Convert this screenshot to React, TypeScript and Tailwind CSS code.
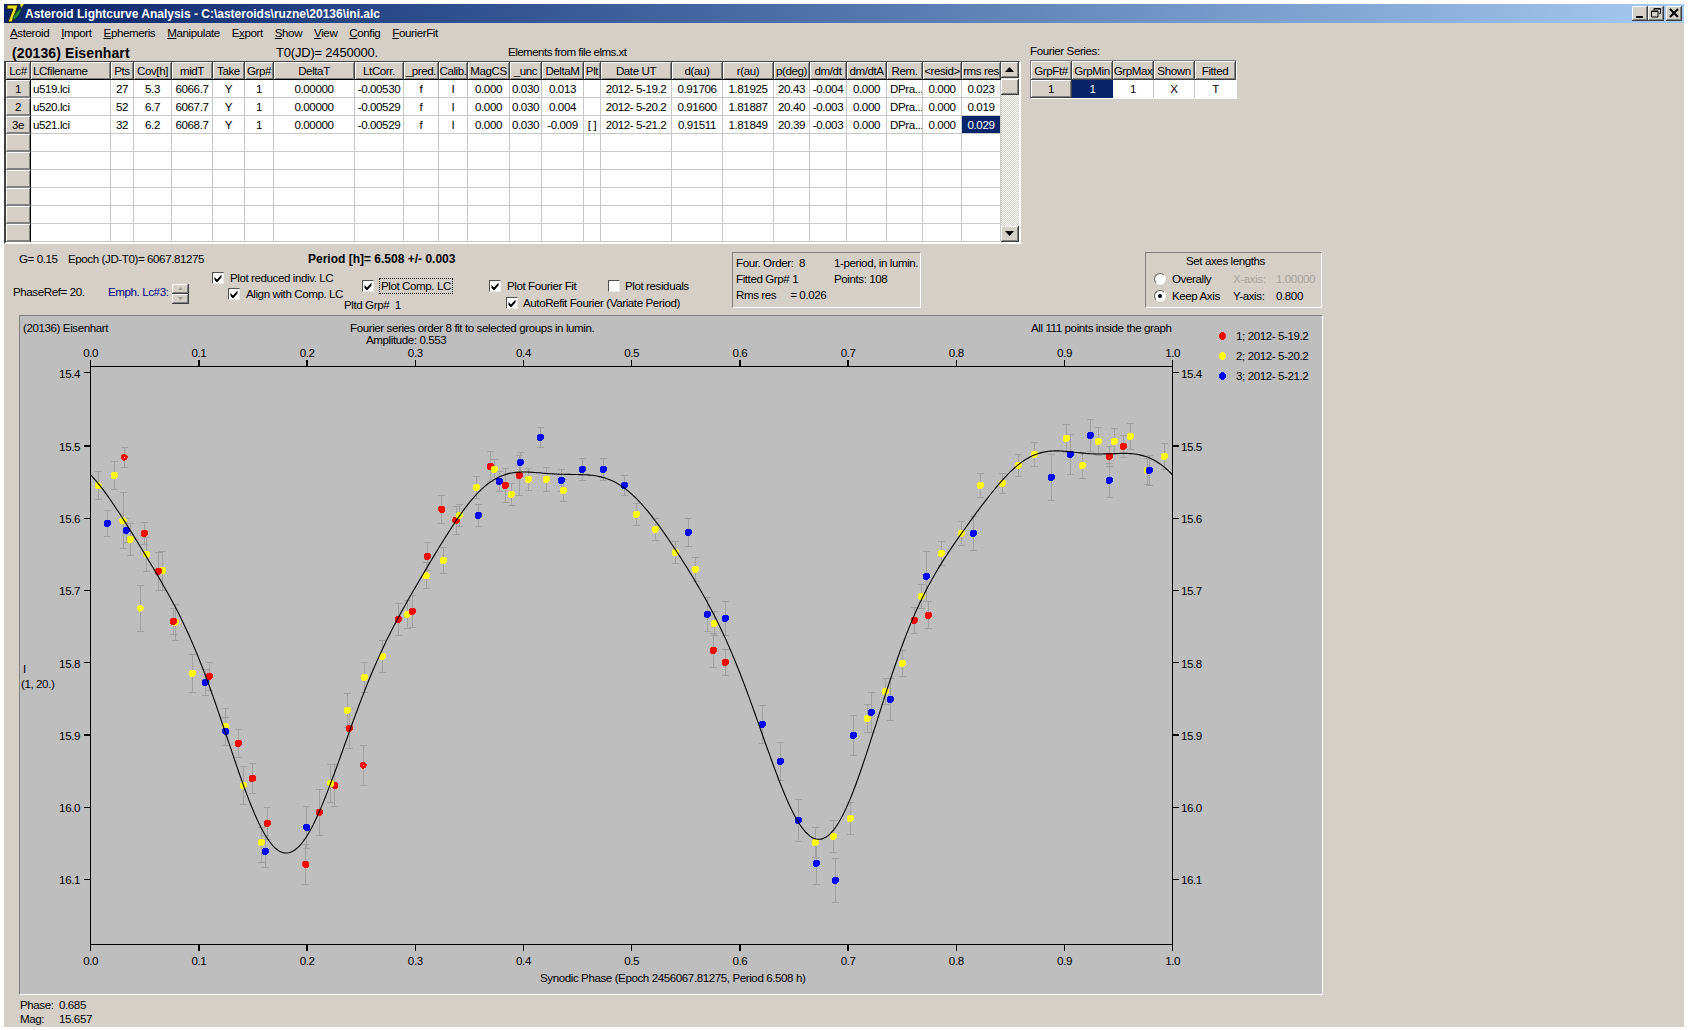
import React from "react";

const raised = "shadow-[inset_1px_1px_0_#ffffff,inset_-1px_-1px_0_#808080]";
const cols = "grid grid-cols-[25px_80px_23px_38px_41px_32px_29px_81px_49px_35px_29px_42px_32px_42px_17px_71px_51px_51px_36px_37px_40px_36px_39px_39px]";
const headers = ["Lc#","LCfilename","Pts","Cov[h]","midT","Take","Grp#","DeltaT","LtCorr.","_pred.","Calib.","MagCS","_unc","DeltaM","Plt","Date UT","d(au)","r(au)","p(deg)","dm/dt","dm/dtA","Rem.","<resid>","rms res"];
const rows = [
  ["1","u519.lci","27","5.3","6066.7","Y","1","0.00000","-0.00530","f","I","0.000","0.030","0.013","","2012- 5-19.2","0.91706","1.81925","20.43","-0.004","0.000","DPra...","0.000","0.023"],
  ["2","u520.lci","52","6.7","6067.7","Y","1","0.00000","-0.00529","f","I","0.000","0.030","0.004","","2012- 5-20.2","0.91600","1.81887","20.40","-0.003","0.000","DPra...","0.000","0.019"],
  ["3e","u521.lci","32","6.2","6068.7","Y","1","0.00000","-0.00529","f","I","0.000","0.030","-0.009","[ ]","2012- 5-21.2","0.91511","1.81849","20.39","-0.003","0.000","DPra...","0.000","0.029"],
  ...Array.from({ length: 6 }, () => Array.from({ length: 24 }, () => "")),
];
const menu = [
  ["", "A", "steroid"], ["", "I", "mport"], ["", "E", "phemeris"], ["", "M", "anipulate"],
  ["E", "x", "port"], ["", "S", "how"], ["", "V", "iew"], ["", "C", "onfig"], ["", "F", "ourierFit"],
];

type P = [number, number, number, number, string, number?];
const pts: P[] = [];
function add(x0: number, y0: number, list: [number, number, number, number, string, number?][]) {
  for (const [x, y, t, b, c, h] of list) {
    pts.push([x0 + x / 3, y0 + y / 3, y0 + t / 3, y0 + b / 3, c, h]);
  }
}
const R = "#ff0000", Y = "#ffff00", B = "#0000ff";
add(60, 360, [
  [115,377,335,418,Y],[163,346,304,388,Y],[193,292,262,322,R,1],[142,490,451,529,B],[189,482,397,565,Y],[199,511,475,547,B],
  [211,538,490,586,Y],[253,520,487,553,R],[260,583,532,634,Y],[241,745,676,814,Y,1],[308,631,574,691,Y],[295,634,576,691,R],
  [346,787,733,841,Y],[340,784,745,823,R],[1098,647,607,685,Y],[1102,589,547,631,R],[1150,601,562,640,Y],[1145,448,406,490,R],
  [1188,481,439,523,R],[1198,466,433,499,Y],[1015,778,730,826,R],[1042,763,721,805,Y],[1057,754,706,802,R],
]);
add(60, 650, [
  [397,70,12,127,Y],[436,97,58,136,B],[448,79,37,121,R],[497,229,175,285,Y],[497,244,202,285,B],[535,280,238,322,R],[550,406,349,463,Y],
  [577,385,340,430,R],[622,520,472,568,R],[604,577,532,637,Y],[616,604,556,652,B],[740,532,469,595,B],[737,643,583,703,R],[778,487,418,556,R],
  [824,406,343,469,R],[812,400,343,457,Y],[862,181,130,232,Y],[868,235,175,295,R],[910,346,286,406,R,1],[913,82,37,127,Y],[967,19,-29,67,Y],
]);
add(470, 400, [
  [19,262,229,295,Y],[25,346,313,379,B],[61,199,154,244,R],[73,208,178,238,Y],[88,244,214,274,B],[106,256,205,307,R],[124,283,250,316,Y],
  [151,187,157,230,B],[148,226,166,286,R],[175,238,205,271,Y],[211,112,82,142,B],[229,238,202,274,Y],[280,271,238,304,Y],[274,241,208,274,B],
  [337,208,175,241,B],[400,208,175,241,B],[463,256,226,286,B],[499,343,310,376,Y],[556,388,355,421,Y],[616,457,424,490,Y],[655,397,355,439,B],
  [676,508,472,544,Y],[712,643,592,694,B],[733,670,634,706,Y],[766,655,604,706,B],[730,751,700,802,R],[766,787,748,826,R],
]);
add(670, 660, [
  [277,193,136,250,B],[331,304,247,361,B],[385,481,418,544,B],[436,547,502,592,Y],[439,610,547,673,B],[490,529,481,577,Y],[496,661,595,727,B],
  [541,475,427,523,Y],[550,226,166,286,B],[592,175,133,217,Y],[604,157,97,217,B],[646,94,55,133,Y],[661,118,55,181,B],[697,10,-30,49,Y],
]);
add(880, 400, [
  [103,661,622,700,R],[145,646,604,685,R],[124,589,553,625,Y],[139,529,454,604,B],[184,460,424,496,Y],[244,400,364,436,Y],[280,400,349,451,B],
  [301,256,220,292,Y],[367,250,220,280,Y],[415,196,163,229,Y],[463,163,127,199,Y],[514,232,163,301,B],[559,115,73,157,Y],[571,163,103,223,B],
  [607,196,157,235,Y],[631,106,58,154,B],[655,124,82,166,Y],[688,169,139,199,R],[688,241,190,292,B],[703,124,85,163,Y],[730,139,106,172,R],
  [751,109,70,148,Y],[802,211,175,253,Y],[808,211,166,256,B],[853,169,130,208,Y],
]);

const curve: [number, number][] = [
  [90.7,475],[98.3,484],[106.7,496.7],[123.3,520],[146.7,554.3],[158.3,573.3],[173.3,606.7],[194.3,650],[210,686.7],[225.7,731.7],[243.3,786.7],
  [256.7,820],[266.7,836.7],[276.7,846.7],[286.7,852],[293.3,851],[306.7,836.7],[320,811.7],[331.7,783.3],[350,728.3],[365,686.7],[382.7,650],
  [398.3,618.3],[423.3,573.3],[456.7,520],[470,501.7],[486.7,485],[500,477.3],[513.3,472.7],[530,471.3],[560,473.3],[583.3,475.3],[603.3,479.3],
  [623.3,487.3],[640,501.7],[656.7,521.7],[673.3,545],[690,573.3],[703.3,595],[720,630],[734.3,660],[746.7,693.3],[763.3,730],[780,781.7],
  [798.3,821.7],[810,838.3],[820,841.7],[830,836.7],[843.3,815],[856.7,780],[870,740],[883.3,697],[890,680],[901.7,648.3],[915,616.7],[925,595],
  [941.7,563.3],[961.7,531.7],[980,505],[1000,483.3],[1018.3,465],[1036.7,455],[1053.3,452.3],[1080,452.3],[1106.7,452.3],[1130,453.3],[1150,459.3],[1172.7,474],
];

// The plotted curve is an order-8 Fourier series: fit one through the traced points so it stays smooth.
function fourierPath(p: [number, number][]) {
  const order = 8;
  const n = 2 * order + 1;
  const basis = (t: number) => {
    const v = [1];
    for (let k = 1; k <= order; k++) v.push(Math.cos(2 * Math.PI * k * t), Math.sin(2 * Math.PI * k * t));
    return v;
  };
  const A = Array.from({ length: n }, () => new Array(n + 1).fill(0));
  for (const [x, y] of p) {
    const b = basis((x - 90.7) / 1082);
    for (let i = 0; i < n; i++) {
      for (let j = 0; j < n; j++) A[i][j] += b[i] * b[j];
      A[i][n] += b[i] * y;
    }
  }
  for (let i = 0; i < n; i++) A[i][i] += 1e-6;
  for (let i = 0; i < n; i++) {
    let m = i;
    for (let r = i + 1; r < n; r++) if (Math.abs(A[r][i]) > Math.abs(A[m][i])) m = r;
    [A[i], A[m]] = [A[m], A[i]];
    for (let r = 0; r < n; r++) {
      if (r === i) continue;
      const f = A[r][i] / A[i][i];
      for (let c = i; c <= n; c++) A[r][c] -= f * A[i][c];
    }
  }
  const w = A.map((r, i) => r[n] / r[i]);
  let d = "";
  for (let i = 0; i <= 540; i++) {
    const t = i / 540;
    const b = basis(t);
    const y = b.reduce((s, v, k) => s + v * w[k], 0);
    d += `${i ? "L" : "M"}${(90.7 + t * 1082).toFixed(1)} ${y.toFixed(1)}`;
  }
  return d;
}
const curvePath = fourierPath(curve);

const xTicks = [0,1,2,3,4,5,6,7,8,9,10].map((i) => ({ x: 90.7 + i * 108.2, l: (i / 10).toFixed(1) }));
const yTicks = [[372.7,"15.4"],[446,"15.5"],[518.3,"15.6"],[590.3,"15.7"],[662.7,"15.8"],[735,"15.9"],[807.3,"16.0"],[879.3,"16.1"]] as [number, string][];

function Check({ checked = true }: { checked?: boolean }) {
  return (
    <span className="inline-flex w-[12px] h-[12px] shrink-0 bg-white border border-t-[#505050] border-l-[#505050] border-r-[#e8e8e8] border-b-[#e8e8e8] items-center justify-center">
      {checked && (
        <svg width="10" height="10" viewBox="0 0 10 10"><path d="M1.5 4L4 6.5 8.5 1.5v3L4 9.5 1.5 7z" fill="#000" /></svg>
      )}
    </span>
  );
}
function Radio({ on = false }: { on?: boolean }) {
  return (
    <span className="inline-flex w-[12px] h-[12px] rounded-full bg-white border border-t-[#606060] border-l-[#606060] border-r-[#f4f4f4] border-b-[#f4f4f4] items-center justify-center shrink-0">
      {on && <span className="w-[4px] h-[4px] rounded-full bg-black" />}
    </span>
  );
}
function Tri({ up, color = "#000" }: { up: boolean; color?: string }) {
  return (
    <svg width="9" height="5" viewBox="0 0 9 5"><path d={up ? "M4.5 0L9 5H0z" : "M0 0h9L4.5 5z"} fill={color} /></svg>
  );
}
function WinBtn({ children }: { children: React.ReactNode }) {
  return (
    <div className={`w-[16px] h-[15px] bg-[#d4d0c8] border-r border-b border-[#404040] flex items-center justify-center ${raised}`}>{children}</div>
  );
}

export default function App() {
  return (
    <div className="w-[1688px] h-[1030px] bg-white pt-[4px] pl-[4px] pr-[4px] pb-[3px] overflow-hidden font-['Liberation_Sans',Arial,sans-serif] text-[11.6px] tracking-[-0.42px] text-black leading-[14px]">
      <div className="w-full h-full bg-[#d4d0c8] flex flex-col">
        {/* Title bar */}
        <div className="h-[19px] shrink-0 bg-linear-to-r from-[#0a246a] to-[#a6caf0] flex items-center">
          <svg width="19" height="19" viewBox="0 0 19 19" className="ml-[2px] shrink-0">
            <path d="M1 1h11L6 18H2L7 5H1z" fill="#e8e020" stroke="#201808" strokeWidth="0.9" />
            <path d="M7 14C8 10 11 7 16 4l-3 7-5 5z" fill="#2a8a3a" stroke="#0a3010" strokeWidth="0.6" />
            <path d="M14 0l1 4 3-4z" fill="#e8e020" />
          </svg>
          <span className="font-bold text-white text-[12px] tracking-[0px] whitespace-pre">Asteroid Lightcurve Analysis - C:\asteroids\ruzne\20136\ini.alc</span>
          <div className="ml-auto mr-[2px] flex gap-0 items-center">
            <WinBtn><svg width="10" height="10" viewBox="0 0 10 10"><path d="M1 8h7v2H1z" fill="#000" /></svg></WinBtn>
            <WinBtn><svg width="10" height="10" viewBox="0 0 10 10"><path d="M3 .5h6.5v5H8M3 .5v2M.5 3h6.5v6H.5z M.5 3.5h6.5M3 1h6.5" fill="none" stroke="#000" /></svg></WinBtn>
            <div className="w-[2px]" />
            <WinBtn><svg width="10" height="10" viewBox="0 0 10 10"><path d="M1 1l8 8M9 1L1 9" stroke="#000" strokeWidth="2" /></svg></WinBtn>
          </div>
        </div>
        {/* Menu */}
        <div className="h-[21px] shrink-0 flex items-center pl-[6px] gap-[12px] pb-[1px]">
          {menu.map(([a, u, b], i) => (
            <span key={i} className="whitespace-pre">{a}<span className="underline">{u}</span>{b}</span>
          ))}
        </div>
        {/* Upper section */}
        <div className="flex shrink-0 h-[200px]">
          <div className="w-[1017px] shrink-0 flex flex-col">
            <div className="h-[17px] flex items-center shrink-0">
              <span className="ml-[8px] w-[264px] font-bold text-[14px] tracking-[0.1px]">(20136) Eisenhart</span>
              <span className="w-[232px] text-[13px] tracking-[-0.2px]">T0(JD)= 2450000.</span>
              <span className="-mt-[2px] tracking-[-0.55px]">Elements from file elms.xt</span>
            </div>
            <div className="h-[183px] border-t border-l-2 border-r-2 border-b-2 border-t-[#404040] border-l-[#404040] border-r-white border-b-white flex">
              <div className="w-[995px] shrink-0">
                <div className={cols}>
                  {headers.map((h, i) => (
                    <div key={i} className={`h-[18px] pt-[1px] bg-[#d4d0c8] border-r border-[#404040] border-b-black border-b flex items-center ${i === 1 ? "justify-start pl-[2px]" : "justify-center"} whitespace-pre overflow-hidden ${raised}`}>{h}</div>
                  ))}
                  {rows.map((r, ri) =>
                    r.map((c, ci) => {
                      if (ci === 0)
                        return (
                          <div key={ri + "-" + ci} className={`h-[18px] bg-[#d4d0c8] border-r border-black border-b border-b-[#808080] flex items-center justify-center ${raised}`}>{c}</div>
                        );
                      const sel = ri === 2 && ci === 23;
                      return (
                        <div key={ri + "-" + ci} className={`h-[18px] border-r border-b border-[#c8c8c8] flex items-center whitespace-pre overflow-hidden ${ci === 1 ? "justify-start pl-[2px]" : ci === 21 ? "justify-start pl-[3px]" : "justify-center"} ${sel ? "bg-[#0a246a] text-white" : "bg-white"}`}>{c}</div>
                      );
                    })
                  )}
                </div>
              </div>
              <div className="w-[18px] h-full flex flex-col bg-[repeating-conic-gradient(#ffffff_0_25%,#d4d0c8_0_50%)] bg-[length:2px_2px]">
                <div className={`h-[16px] shrink-0 bg-[#d4d0c8] border-r border-b border-[#404040] flex items-center justify-center ${raised}`}><Tri up /></div>
                <div className={`h-[16px] mt-[1px] shrink-0 bg-[#d4d0c8] border-r border-b border-[#404040] ${raised}`} />
                <div className={`h-[16px] mt-auto shrink-0 bg-[#d4d0c8] border-r border-b border-[#404040] flex items-center justify-center ${raised}`}><Tri up={false} /></div>
              </div>
            </div>
          </div>
          <div className="ml-[9px] w-[207px] flex flex-col">
            <div className="h-[16px] flex items-center shrink-0 -mt-[1px]">Fourier Series:</div>
            <div className="border border-t-[#808080] border-l-[#808080] border-r-white border-b-white bg-white w-[207px] mt-[1px]">
              <div className="grid grid-cols-[41px_41px_41px_41px_41px] ">
                {["GrpFt#","GrpMin","GrpMax","Shown","Fitted"].map((h) => (
                  <div key={h} className={`h-[19px] pt-[1px] bg-[#d4d0c8] border-r border-b border-[#404040] flex items-center justify-center whitespace-pre overflow-hidden ${raised}`}>{h}</div>
                ))}
                <div className={`h-[18px] bg-[#d4d0c8] border-r border-b border-[#404040] flex items-center justify-center ${raised}`}>1</div>
                <div className="h-[18px] bg-[#0a246a] text-white flex items-center justify-center">1</div>
                <div className="h-[18px] bg-white border-r border-[#c8c8c8] flex items-center justify-center">1</div>
                <div className="h-[18px] bg-white border-r border-[#c8c8c8] flex items-center justify-center">X</div>
                <div className="h-[18px] bg-white flex items-center justify-center">T</div>
              </div>
            </div>
          </div>
        </div>
        {/* Controls */}
        <div className="flex h-[71px] shrink-0">
          <div className="w-[728px] shrink-0 flex flex-col">
            <div className="flex h-[14px] mt-[8px] shrink-0 whitespace-pre">
              <span className="ml-[15px] w-[49px]">G= 0.15</span>
              <span className="w-[240px]">Epoch (JD-T0)= 6067.81275</span>
              <span className="font-bold text-[12px] tracking-[0px]">Period [h]= 6.508 +/- 0.003</span>
            </div>
            <div className="flex">
              <span className="ml-[9px] w-[95px] mt-[19px] h-[14px]">PhaseRef= 20.</span>
              <span className="w-[64px] mt-[19px] h-[14px] text-[#000080]">Emph. Lc#3:</span>
              <div className="mt-[18px] w-[17px] h-[20px] flex flex-col shrink-0">
                <div className={`h-[10px] bg-[#d4d0c8] border-r border-b border-[#404040] flex items-center justify-center ${raised}`}><svg width="5" height="3" viewBox="0 0 5 3"><path d="M2.5 0L5 3H0z" fill="#9a9a9a" /></svg></div>
                <div className={`h-[10px] bg-[#d4d0c8] border-r border-b border-[#404040] flex items-center justify-center ${raised}`}><svg width="5" height="3" viewBox="0 0 5 3"><path d="M0 0h5L2.5 3z" fill="#9a9a9a" /></svg></div>
              </div>
              <div className="ml-[23px] w-[132px] shrink-0 flex flex-col">
                <label className="flex items-center gap-[6px] h-[14px] mt-[5px] whitespace-pre"><Check />Plot reduced indiv. LC</label>
                <label className="flex items-center gap-[6px] h-[14px] mt-[2px] ml-[16px] whitespace-pre"><Check />Align with Comp. LC</label>
              </div>
              <div className="w-[145px] shrink-0 flex flex-col">
                <label className="flex items-center gap-[5px] h-[14px] mt-[13px] ml-[18px] whitespace-pre"><Check /><span className="border border-dotted border-black px-[1px]">Plot Comp. LC</span></label>
                <span className="mt-[5px] h-[14px] whitespace-pre">Pltd Grp#  1</span>
              </div>
              <div className="flex flex-col">
                <div className="flex mt-[13px] h-[14px]">
                  <label className="flex items-center gap-[6px] w-[119px] whitespace-pre"><Check />Plot Fourier Fit</label>
                  <label className="flex items-center gap-[5px] whitespace-pre"><Check checked={false} />Plot residuals</label>
                </div>
                <label className="flex items-center gap-[5px] h-[14px] mt-[3px] ml-[17px] whitespace-pre"><Check />AutoRefit Fourier (Variate Period)</label>
              </div>
            </div>
          </div>
          <div className="mt-[8px] w-[189px] h-[56px] border border-t-[#808080] border-l-[#808080] border-r-white border-b-white pl-[3px] pt-[2px] shrink-0">
            <div className="grid grid-cols-[98px_1fr] auto-rows-[16px] items-center whitespace-pre">
              <span>Four. Order:  8</span><span>1-period, in lumin.</span>
              <span>Fitted Grp# 1</span><span>Points: 108</span>
              <span>Rms res     = 0.026</span><span />
            </div>
          </div>
          <div className="ml-[224px] mt-[8px] w-[177px] h-[56px] border border-t-[#808080] border-l-[#808080] border-r-white border-b-white shrink-0">
            <div className="pl-[40px] h-[16px] flex items-center">Set axes lengths</div>
            <div className="flex items-center h-[17px] pl-[8px] whitespace-pre mt-[1px]">
              <Radio /><span className="ml-[6px] w-[61px]">Overally</span><span className="w-[43px] text-[#a8a49c]">X-axis:</span><span className="text-[#a8a49c]">1.00000</span>
            </div>
            <div className="flex items-center h-[17px] pl-[8px] whitespace-pre">
              <Radio on /><span className="ml-[6px] w-[61px]">Keep Axis</span><span className="w-[43px]">Y-axis:</span><span>0.800</span>
            </div>
          </div>
        </div>
        {/* Plot */}
        <div className="ml-[15px] w-[1304px] h-[680px] shrink-0 bg-[#bebebe] border border-t-[#808080] border-l-[#808080] border-r-white border-b-white">
          <svg width="1302" height="678" viewBox="20 316 1302 678" className="block" fill="#000">
            <text x="23" y="332">(20136) Eisenhart</text>
            <text x="350" y="332">Fourier series order 8 fit to selected groups in lumin.</text>
            <text x="366" y="344">Amplitude: 0.553</text>
            <text x="1031" y="332">All 111 points inside the graph</text>
            <text x="23" y="673">I</text>
            <text x="21" y="688">(1, 20.)</text>
            <g shapeRendering="crispEdges">
              <circle cx="1222.5" cy="336" r="3.7" fill={R} />
              <circle cx="1222.5" cy="356" r="3.7" fill={Y} />
              <circle cx="1222.5" cy="376" r="3.7" fill={B} />
            </g>
            <text x="1236" y="340">1; 2012- 5-19.2</text>
            <text x="1236" y="360">2; 2012- 5-20.2</text>
            <text x="1236" y="380">3; 2012- 5-21.2</text>
            <g shapeRendering="crispEdges" stroke="#000" strokeWidth="1.3" fill="none">
              <rect x="90.7" y="366.3" width="1082" height="578" />
              {xTicks.map((t) => (
                <g key={t.l}>
                  <line x1={t.x} x2={t.x} y1={360} y2={366} />
                  <line x1={t.x} x2={t.x} y1={944} y2={951} />
                </g>
              ))}
              {yTicks.map(([y, l]) => (
                <g key={l}>
                  <line x1={84} x2={90.7} y1={y} y2={y} />
                  <line x1={1172.7} x2={1179} y1={y} y2={y} />
                </g>
              ))}
            </g>
            {xTicks.map((t) => (
              <g key={t.l}>
                <text x={t.x} y={357} textAnchor="middle">{t.l}</text>
                <text x={t.x} y={965} textAnchor="middle">{t.l}</text>
              </g>
            ))}
            {yTicks.map(([y, l]) => (
              <g key={l}>
                <text x={80} y={y + 5} textAnchor="end">{l}</text>
                <text x={1181} y={y + 5}>{l}</text>
              </g>
            ))}
            <text x="540" y="981.5">Synodic Phase (Epoch 2456067.81275, Period 6.508 h)</text>
            <g stroke="#a0a0a0" strokeWidth="1" shapeRendering="crispEdges">
              {pts.map(([x, , t, b], i) => (
                <g key={i}>
                  <line x1={x} x2={x} y1={t} y2={b} />
                  <line x1={x - 3.5} x2={x + 3.5} y1={t} y2={t} />
                  <line x1={x - 3.5} x2={x + 3.5} y1={b} y2={b} />
                </g>
              ))}
            </g>
            <g shapeRendering="crispEdges">
              {pts.map(([x, y, , , c, h], i) => (
                <g key={i}>
                  <circle cx={x} cy={y} r={h ? 3.3 : 3.7} fill={c} />
                  {h ? <rect x={x - 0.8} y={y - 0.8} width="1.6" height="1.6" fill="#ffffff" opacity="0.7" /> : null}
                </g>
              ))}
            </g>
            <path d={curvePath} fill="none" stroke="#000" strokeWidth="1.1" />
          </svg>
        </div>
        {/* Status */}
        <div className="pl-[16px] pt-[3px] whitespace-pre">
          <div className="flex h-[14px] items-center"><span className="w-[39px]">Phase:</span><span>0.685</span></div>
          <div className="flex h-[14px] items-center"><span className="w-[39px]">Mag:</span><span>15.657</span></div>
        </div>
      </div>
    </div>
  );
}
